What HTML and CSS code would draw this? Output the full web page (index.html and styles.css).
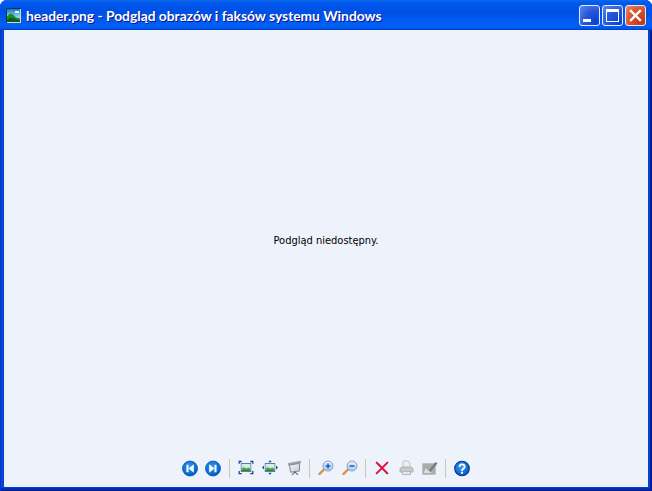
FILE: index.html
```html
<!DOCTYPE html>
<html lang="pl">
<head>
<meta charset="utf-8">
<title>Podgląd obrazów i faksów systemu Windows</title>
<link rel="stylesheet" href="styles.css">
</head>
<body>
<svg class="defs" width="0" height="0" aria-hidden="true">
  <defs>
    <radialGradient id="ball" cx=".45" cy=".4" r=".65"><stop offset="0" stop-color="#3aa0f0"/><stop offset=".65" stop-color="#0b6fd6"/><stop offset="1" stop-color="#0348a8"/></radialGradient>
    <linearGradient id="sky" x1="0" y1="0" x2="0" y2="1"><stop offset="0" stop-color="#1677c8"/><stop offset=".6" stop-color="#8fd6ee"/></linearGradient>
    <linearGradient id="glass" x1="0" y1="0" x2="0" y2="1"><stop offset="0" stop-color="#eaf3fd"/><stop offset="1" stop-color="#a3c5ee"/></linearGradient>
    <linearGradient id="screen" x1="0" y1="0" x2="1" y2="1"><stop offset="0" stop-color="#f4f6fb"/><stop offset="1" stop-color="#c3cbe2"/></linearGradient>
    <symbol id="pic" viewBox="0 0 11 9">
      <rect x=".5" y=".5" width="10" height="8" fill="#d3ecee" stroke="#5f7f9c"/>
      <path d="M1 8V5.600L3.500 4 5.500 5.400 8 4.600 10 5.800V8z" fill="#58a848"/>
      <path d="M1 8V7L5 6.600l5 .4V8z" fill="#2a8430"/>
    </symbol>
  </defs>
</svg>
<div class="window">
  <header class="titlebar">
    <svg class="app-icon" width="15" height="15" viewBox="0 0 15 15">
      <rect width="15" height="15" fill="#0a3a4a"/>
      <rect x="1" y="1" width="13" height="13" fill="url(#sky)"/>
      <path d="M1 11V8.500l3-3 3 1 3 3 4 1V14H1z" fill="#1f8a2c"/>
      <path d="M1 14v-2.500l5-2 4 2 4 1V14z" fill="#0d5a1e"/>
      <rect x="9" y="3" width="4" height="2" fill="#e8f6fb"/>
      <rect x="14" y="1" width="1" height="14" fill="#d8d8c8"/>
      <rect x="1" y="14" width="14" height="1" fill="#d8d8c8"/>
    </svg>
    <h1 class="title">header.png - Podgląd obrazów i faksów systemu Windows</h1>
    <div class="controls">
      <button class="ctl ctl-blue" aria-label="Minimalizuj"><span class="glyph-min"></span></button>
      <button class="ctl ctl-blue" aria-label="Maksymalizuj"><span class="glyph-max"></span></button>
      <button class="ctl ctl-red" aria-label="Zamknij">
        <svg width="13" height="13" viewBox="0 0 13 13"><path d="M2 2l9 9M11 2l-9 9" stroke="#fff" stroke-width="2.400" stroke-linecap="square"/></svg>
      </button>
    </div>
  </header>
  <main class="client">
    <div class="preview"><p class="message">Podgląd niedostępny.</p></div>
    <nav class="toolbar">
      <span class="tool"><svg class="round" width="16" height="16" viewBox="0 -.5 16 16"><circle cx="8" cy="8" r="7.500" fill="url(#ball)" stroke="#0a5ab8" stroke-width=".8"/><path d="M4.500 4.200h2v7.600h-2zM11.800 3.800v8.400L6.700 8z" fill="#fff"/></svg></span>
      <span class="tool tool-next"><svg class="round" width="16" height="16" viewBox="0 -.5 16 16"><circle cx="8" cy="8" r="7.500" fill="url(#ball)" stroke="#0a5ab8" stroke-width=".8"/><path d="M11.500 4.200h-2v7.600h2zM4.200 3.800v8.400L9.300 8z" fill="#fff"/></svg></span>
      <i class="sep"></i>
      <span class="tool"><svg width="16" height="16" viewBox="0 0 16 16"><use href="#pic" x="2.500" y="3" width="11" height="9"/><path d="M1.200 3.800V1.500h2.500M12.300 1.500h2.500v2.300M14.800 11v2.700h-2.500M3.700 13.700H1.200V11" fill="none" stroke="#0b4aa8" stroke-width="1.300"/></svg></span>
      <span class="tool"><svg width="16" height="16" viewBox="0 0 16 16"><use href="#pic" x="2.500" y="3" width="11" height="9"/><path d="M8 .3l1.800 2H6.200zM8 14.700l1.800-2H6.200zM0 7.500l2-2v4zM16 7.500l-2-2v4z" fill="#0b4aa8"/></svg></span>
      <span class="tool"><svg width="16" height="16" viewBox="0 0 16 16"><path d="M2 3.500L14.500 1l.3 1.800L2.300 5.200z" fill="#a5a6a6" stroke="#8a8b8b" stroke-width=".5"/><path d="M3.500 5l10-1.700V11l-9 1.200z" fill="url(#screen)" stroke="#87868f"/><path d="M9 11.500v1M9 12l-3 2.800M9 12l3 2.800" stroke="#6b6c70" stroke-width="1.100" fill="none"/></svg></span>
      <i class="sep"></i>
      <span class="tool"><svg width="16" height="16" viewBox="0 0 16 16"><path d="M1.600 13.900L6 9.500" stroke="#d9913a" stroke-width="2.400" stroke-linecap="round"/><circle cx="10" cy="6" r="5" fill="url(#glass)" stroke="#84a3cc"/><path d="M7.500 6h5M10 3.500v5" stroke="#1a5fc0" stroke-width="1.500"/></svg></span>
      <span class="tool"><svg width="16" height="16" viewBox="0 0 16 16"><path d="M1.600 13.900L6 9.500" stroke="#d9913a" stroke-width="2.400" stroke-linecap="round"/><circle cx="10" cy="6" r="5" fill="url(#glass)" stroke="#84a3cc"/><path d="M7.500 6h5" stroke="#1a5fc0" stroke-width="1.500"/></svg></span>
      <i class="sep"></i>
      <span class="tool"><svg width="16" height="16" viewBox="0 0 16 16"><path d="M2.800 2.800l10.400 10.400M13.200 2.800L2.800 13.200" stroke="#dc143c" stroke-width="2" stroke-linecap="square"/></svg></span>
      <span class="tool"><svg width="16" height="16" viewBox="0 0 16 16"><path d="M5 1h5.500L12 4v4H5z" fill="#eef0ef" stroke="#c0c3c2"/><path d="M2 8.500L4 7h9l2 1.500v3.500H2z" fill="#c6c9c8" stroke="#adb0af"/><path d="M4.500 11.500h8v3h-8z" fill="#e6e8e7" stroke="#b5b8b7"/></svg></span>
      <span class="tool"><svg width="16" height="16" viewBox="0 0 16 16"><path d="M.5 3.500h13v11H.5z" fill="#a9acab" stroke="#bfc2c1"/><path d="M1.500 13l2.500-5 2 3 1.500-1.500 2 3.500z" fill="#dcdedd"/><path d="M6.500 10.500L13.500 2 15.500 3.500 8.500 12z" fill="#7b7e7d"/></svg></span>
      <i class="sep"></i>
      <span class="tool"><svg class="round" width="16" height="16" viewBox="0 -.5 16 16"><circle cx="8" cy="8" r="7.300" fill="url(#ball)" stroke="#15388a" stroke-width="1.100"/><path d="M5.500 6.200a2.600 2.300 0 1 1 4 1.900C8.400 8.900 8 9.200 8 10.400" fill="none" stroke="#fff" stroke-width="1.900"/><rect x="7" y="11.300" width="2" height="2" fill="#fff"/></svg></span>
    </nav>
  </main>
</div>
</body>
</html>
```
FILE: styles.css
```css
* { box-sizing: border-box; margin: 0; padding: 0; }
html, body { width: 652px; height: 491px; overflow: hidden; }
.defs { position: absolute; }
body { background: #fff; font-family: "DejaVu Sans Condensed", "DejaVu Sans", sans-serif; font-stretch: condensed; }
.window {
  width: 652px;
  height: 491px;
  display: flex;
  flex-direction: column;
  background: #0848dc;
  border-radius: 7px 7px 0 0;
  overflow: hidden;
  box-shadow: inset 1px 0 0 #0831c4, inset -2px 0 0 #001d96, inset 0 -1px 0 #001a8c, inset 0 -3px 0 #0030b8;
}
.titlebar {
  height: 30px;
  flex: none;
  display: flex;
  align-items: center;
  padding: 1px 6px 0 6px;
  background: linear-gradient(180deg, #0a6ae8 0, #0058ee 10%, #0050e4 40%, #0060f6 85%, #0058f0 93%, #0040d0 100%);
}
.app-icon { flex: none; }
.title {
  margin-left: 5px;
  flex: 1;
  font-family: "Lato", sans-serif;
  font-stretch: normal;
  font-size: 13.8px;
  font-weight: 700;
  color: #fff;
  white-space: nowrap;
  text-shadow: 1px 1px 0 #0f1089;
}
.controls { display: flex; gap: 2px; }
.ctl {
  width: 21px;
  height: 21px;
  border: 1px solid #e4ebfa;
  border-radius: 3px;
  display: flex;
  align-items: center;
  justify-content: center;
}
.ctl-blue { background: radial-gradient(circle at 85% 85%, #0c3fd0 0, #2556dc 50%, #6488ea 100%); }
.ctl-red { background: radial-gradient(circle at 85% 85%, #bf3814 0, #d9522c 55%, #e98c6e 100%); }
.glyph-min { width: 8px; height: 3px; background: #fff; margin: 10px 5px 0 0; }
.glyph-max { width: 13px; height: 13px; border: 1px solid #fff; border-top-width: 3px; }
.client {
  flex: 1;
  margin: 0 4px 4px;
  background: #eef3fb;
  display: flex;
  flex-direction: column;
  min-height: 0;
  box-shadow: 0 0 0 1px #0040d0;
}
.preview {
  flex: 1;
  display: flex;
  align-items: center;
  justify-content: center;
}
.message { font-size: 11px; color: #000; }
.toolbar {
  height: 36px;
  flex: none;
  display: flex;
  align-items: center;
  justify-content: center;
  padding-bottom: 2px;
}
.tool {
  width: 24px;
  height: 16px;
  display: flex;
  justify-content: center;
}
.tool-next { margin: 0 1px 0 -1px; }
.round { overflow: visible; }
.sep {
  width: 1px;
  height: 19px;
  background: #c9c7b9;
  margin: 0 4px 0 3px;
}
```
